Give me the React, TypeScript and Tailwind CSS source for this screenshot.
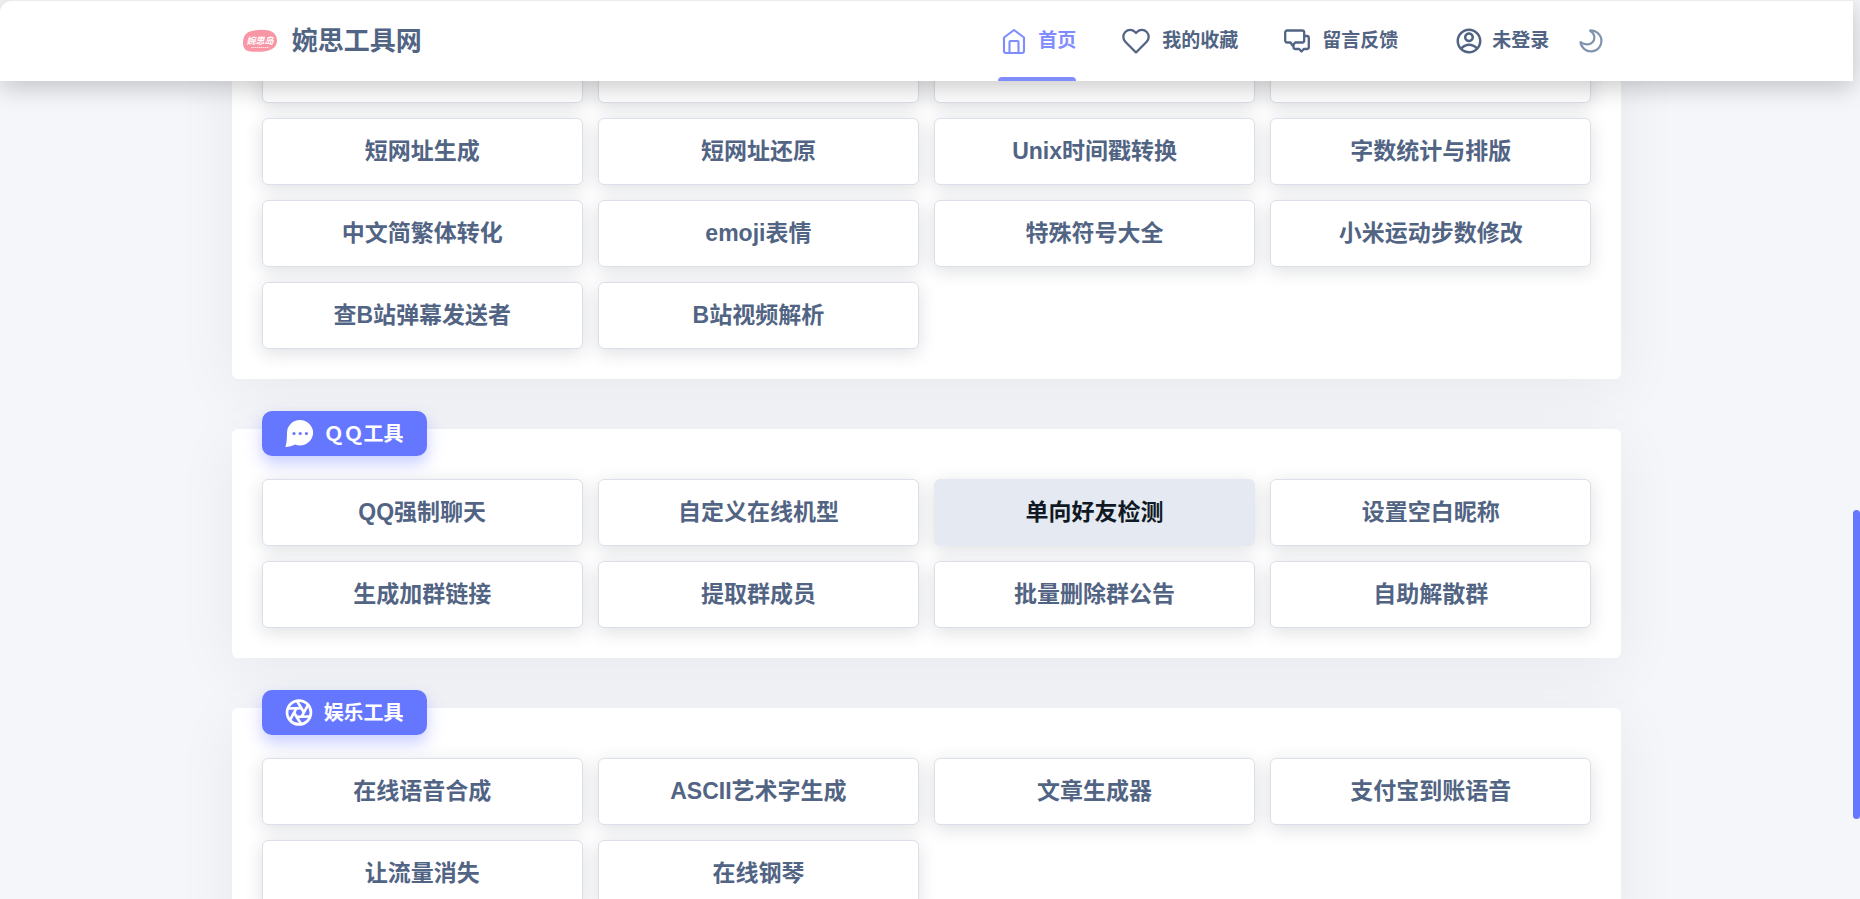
import { RiAccountCircleLine } from "react-icons/ri";

interface Tool {
  name: string;
  active?: boolean;
}

interface Section {
  title?: string;
  icon?: React.ComponentType<{ className?: string }>;
  tools: Tool[];
}

function HomeIcon({ className }: { className?: string }) {
  return (
    <svg viewBox="0 0 24 26" fill="none" stroke="currentColor" strokeWidth="2.1" strokeLinejoin="round" className={className}>
      <path d="M12 2 22 9.5V23a2 2 0 0 1-2 2H4a2 2 0 0 1-2-2V9.500Z" />
      <path d="M7.500 25V14a1 1 0 0 1 1-1h7a1 1 0 0 1 1 1v11" />
    </svg>
  );
}

function HeartIcon({ className }: { className?: string }) {
  return (
    <svg viewBox="0 0 28 26" fill="none" stroke="currentColor" strokeWidth="2.3" strokeLinejoin="round" className={className}>
      <path d="M14 24.500 3.300 13.700A6.900 6.900 0 0 1 3.300 4 6.800 6.800 0 0 1 13 4l1 1 1-1a6.800 6.800 0 0 1 9.700 0 6.900 6.900 0 0 1 0 9.700Z" />
    </svg>
  );
}

function TalkIcon({ className }: { className?: string }) {
  return (
    <svg viewBox="0 0 26 24" fill="none" stroke="currentColor" strokeWidth="2.3" strokeLinejoin="round" strokeLinecap="round" className={className}>
      <path d="M3.200 1.500h15a2 2 0 0 1 2 2v8a2 2 0 0 1-2 2h-7L8.500 16.500l-2-3H3.200a2 2 0 0 1-2-2v-8a2 2 0 0 1 2-2Z" />
      <path d="M20.200 7h2.600a2 2 0 0 1 2 2v9a2 2 0 0 1-2 2h-3L17.500 22.500 15.200 20h-3.700a2 2 0 0 1-2-2v-2" />
    </svg>
  );
}

function MoonIcon({ className }: { className?: string }) {
  return (
    <svg viewBox="0 0 24 24" fill="none" stroke="currentColor" strokeWidth="2.2" strokeLinejoin="round" className={className}>
      <path d="M11 1.500A10.500 10.500 0 1 1 1.500 13.200C5.500 16 10.500 16.300 13.500 13.200 16.600 10 15.800 4.500 11 1.500Z" />
    </svg>
  );
}

function ChatIcon({ className }: { className?: string }) {
  return (
    <svg viewBox="0 0 28 27" fill="currentColor" className={className}>
      <path d="M15 0a13 12.700 0 1 1-5 24.400C7.500 26 4 26.500.300 26.900 1.300 24.500 2 20 2 12.700A13 12.700 0 0 1 15 0Z" />
      <g className="fill-[#6576ff]">
        <circle cx="9" cy="13.500" r="1.600" />
        <circle cx="15.200" cy="13.500" r="1.600" />
        <circle cx="21.400" cy="13.500" r="1.600" />
      </g>
    </svg>
  );
}

function LensIcon({ className }: { className?: string }) {
  return (
    <svg viewBox="0 0 26 26" fill="none" stroke="currentColor" strokeWidth="2.6" className={className}>
      <circle cx="13" cy="13" r="11.500" />
      {[0, 60, 120, 180, 240, 300].map((deg) => (
        <path key={deg} d="M17.800 13 11 1.800" transform={`rotate(${deg} 13 13)`} />
      ))}
    </svg>
  );
}

function Logo() {
  return (
    <svg viewBox="0 0 36 24" className="h-6 w-9" aria-hidden="true">
      <path
        d="M1 14C1 7 4 3 10 2c5-1.500 12-1.500 17-.5 5 1.500 8 5 8 10 0 6-4 9-10 10.500-5 1-12 1-17 .5C3 21.500 1 19 1 14Z"
        className="fill-[#f896a5]"
      />
      <text x="18" y="15" textAnchor="middle" className="fill-white font-['Noto_Sans_CJK_SC',sans-serif] text-[9px] font-bold italic">
        婉思岛
      </text>
      <path d="M9 18.500h18" className="stroke-white/70" strokeDasharray="1.500 .5" />
    </svg>
  );
}

const navLinks = [
  { name: "首页", icon: HomeIcon, iconClass: "h-[26px] w-6", active: true },
  { name: "我的收藏", icon: HeartIcon, iconClass: "h-[26px] w-7" },
  { name: "留言反馈", icon: TalkIcon, iconClass: "h-6 w-[26px]" },
];

const sections: Section[] = [
  {
    tools: [
      { name: "" },
      { name: "" },
      { name: "" },
      { name: "" },
      { name: "短网址生成" },
      { name: "短网址还原" },
      { name: "Unix时间戳转换" },
      { name: "字数统计与排版" },
      { name: "中文简繁体转化" },
      { name: "emoji表情" },
      { name: "特殊符号大全" },
      { name: "小米运动步数修改" },
      { name: "查B站弹幕发送者" },
      { name: "B站视频解析" },
    ],
  },
  {
    title: "ＱＱ工具",
    icon: ChatIcon,
    tools: [
      { name: "QQ强制聊天" },
      { name: "自定义在线机型" },
      { name: "单向好友检测", active: true },
      { name: "设置空白昵称" },
      { name: "生成加群链接" },
      { name: "提取群成员" },
      { name: "批量删除群公告" },
      { name: "自助解散群" },
    ],
  },
  {
    title: "娱乐工具",
    icon: LensIcon,
    tools: [
      { name: "在线语音合成" },
      { name: "ASCII艺术字生成" },
      { name: "文章生成器" },
      { name: "支付宝到账语音" },
      { name: "让流量消失" },
      { name: "在线钢琴" },
    ],
  },
];

function ToolCard({ tool }: { tool: Tool }) {
  const base =
    "flex h-[67px] items-center justify-center rounded-md border text-[23px] font-bold shadow-[0_4px_18px_rgba(31,43,58,0.15)]";

  if (!tool.name) {
    return <div className={`${base} border-[#dbdfea] bg-white`} />;
  }
  return (
    <a
      href="#"
      className={`${base} ${
        tool.active ? "border-[#e5e9f2] bg-[#e5e9f2] text-[#101924]" : "border-[#dbdfea] bg-white text-[#526484]"
      }`}
    >
      {tool.name}
    </a>
  );
}

function ToolSection({ section }: { section: Section }) {
  const Icon = section.icon;
  return (
    <section className="rounded-md bg-white px-[30px] pb-[30px] shadow-[0_12px_64px_rgba(0,0,0,0.06)]">
      {section.title && Icon && (
        <div className="flex h-[50px] items-start">
          <h2 className="-mt-[18px] flex h-[45px] items-center gap-[11px] rounded-[10px] bg-[#6576ff] px-[23px] text-[20px] font-bold text-white shadow-[0_8px_16px_rgba(101,118,255,0.35)]">
            <Icon className="h-[27px] w-7" />
            {section.title}
          </h2>
        </div>
      )}
      <div className="grid grid-cols-4 gap-[15px]">
        {section.tools.map((tool, i) => (
          <ToolCard key={i} tool={tool} />
        ))}
      </div>
    </section>
  );
}

export default function App() {
  return (
    <div className="flex h-screen overflow-hidden bg-[#f4f6fa] font-['Liberation_Sans','Noto_Sans_CJK_SC',sans-serif] text-[#526484]">
      <div className="flex min-w-0 flex-1 flex-col">
        <header className="z-10 h-[81px] shrink-0 rounded-tl-xl border-t border-[#ebebeb] bg-white shadow-[0_6px_26px_rgba(0,0,0,0.22)]">
          <div className="mx-auto flex h-full w-3/4 items-center justify-between pr-[18px] pl-[10px]">
            <a href="#" className="flex items-center gap-[14px] text-[26px] font-bold">
              <Logo />
              婉思工具网
            </a>
            <nav className="flex h-full items-center text-[19px] font-bold">
              <div className="flex h-full gap-[46px]">
                {navLinks.map(({ name, icon: Icon, iconClass, active }) => (
                  <a
                    key={name}
                    href="#"
                    className={`relative flex items-center gap-3 ${active ? "pl-1 text-[#7f8dff]" : ""}`}
                  >
                    <Icon className={iconClass} />
                    {name}
                    {active && <span className="absolute inset-x-0 bottom-0 h-1 rounded-t bg-[#7f8dff]" />}
                  </a>
                ))}
              </div>
              <a href="#" className="ml-[56px] flex items-center gap-2">
                <RiAccountCircleLine className="size-[30px]" />
                未登录
              </a>
              <button type="button" aria-label="夜间模式" className="ml-[30px] text-[#8094ae]">
                <MoonIcon className="size-6" />
              </button>
            </nav>
          </div>
        </header>

        <main className="min-h-0 flex-1">
          <div className="mx-auto -mt-[45px] flex w-3/4 flex-col gap-[50px]">
            {sections.map((section, i) => (
              <ToolSection key={i} section={section} />
            ))}
          </div>
        </main>
      </div>

      {/* scroll track */}
      <div className="flex w-[7px] shrink-0 flex-col">
        <div className="basis-[56.7%]" />
        <div className="basis-[34.4%] rounded-full bg-[#6576ff]" />
      </div>
    </div>
  );
}
